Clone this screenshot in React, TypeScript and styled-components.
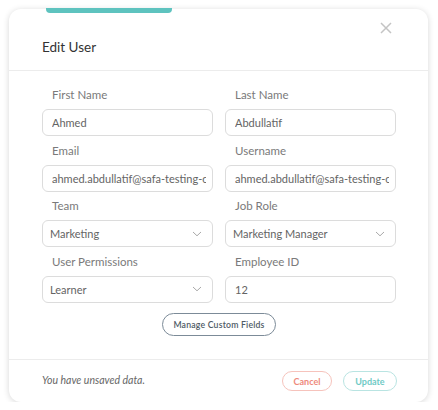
import React from "react";
import styled, { createGlobalStyle } from "styled-components";

const Global = createGlobalStyle`
  html, body { margin: 0; padding: 0; background: #ffffff; }
  body { font-family: Lato, "Open Sans", sans-serif; }
  * { box-sizing: border-box; }
`;

const Card = styled.div`
  position: relative;
  margin: 9px 0 0 9px;
  width: 419px;
  height: 393px;
  background: #fff;
  border-radius: 12px;
  box-shadow: 0 1px 6px rgba(0, 0, 0, 0.16);
  display: flex;
  flex-direction: column;
`;

const TabBar = styled.div`
  position: absolute;
  left: 37px;
  top: -1px;
  width: 126px;
  height: 5px;
  background: #5ec3bf;
  border-radius: 0 0 4px 4px;
`;

const Header = styled.div`
  height: 62px;
  border-bottom: 1px solid #ececec;
  display: flex;
  align-items: flex-end;
  padding: 0 0 14px 33px;
`;

const Title = styled.h2`
  margin: 0;
  font-size: 13.5px;
  font-weight: 400;
  color: #333;
  line-height: 18px;
`;

const CloseBtn = styled.button`
  position: absolute;
  right: 35px;
  top: 12px;
  width: 14px;
  height: 14px;
  padding: 0;
  border: none;
  background: none;
  display: flex;
  align-items: center;
  justify-content: center;
`;

const Body = styled.div`
  flex: 1;
  padding: 16px 32px 0 33px;
  display: flex;
  flex-direction: column;
`;

const Grid = styled.div`
  display: grid;
  grid-template-columns: 171px 171px;
  column-gap: 12px;
  row-gap: 6.6px;
`;

const Field = styled.div`
  display: flex;
  flex-direction: column;
`;

const Label = styled.label`
  font-size: 11.5px;
  line-height: 16px;
  color: #7a7a7a;
  padding-left: 10px;
  margin-bottom: 6px;
`;

const Input = styled.div`
  height: 27px;
  border: 1px solid #dcdcdc;
  border-radius: 6px;
  padding: 0 6px 0 9px;
  display: flex;
  align-items: center;
  font-size: 11px;
  color: #646464;
  white-space: nowrap;
`;

const Value = styled.span`
  flex: 1;
  min-width: 0;
  overflow: hidden;
  white-space: nowrap;
`;

const Select = styled(Input)`
  padding: 0 10px 0 7px;
  justify-content: space-between;
`;

const Actions = styled.div`
  display: flex;
  justify-content: center;
  margin-top: 10px;
`;

const OutlineBtn = styled.button`
  height: 23px;
  width: 114px;
  border: 1px solid #7c8b98;
  border-radius: 12px;
  background: #fff;
  font-family: Lato, sans-serif;
  font-size: 8.7px;
  font-weight: 600;
  letter-spacing: 0.2px;
  color: #4f5b66;
  padding: 0;
`;

const Footer = styled.div`
  height: 43px;
  border-top: 1px solid #ececec;
  display: flex;
  align-items: center;
  padding: 0 31px 0 33px;
  gap: 11px;
`;

const Note = styled.span`
  flex: 1;
  font-size: 10.5px;
  font-style: italic;
  color: #666;
  margin-top: -3px;
`;

const PillBtn = styled.button<{ $tone: "red" | "teal"; $w: number }>`
  height: 20px;
  width: ${(p) => p.$w}px;
  border-radius: 10px;
  background: #fff;
  border: 1px solid ${(p) => (p.$tone === "red" ? "#f6c3bc" : "#b9e4e2")};
  color: ${(p) => (p.$tone === "red" ? "#ee8a7c" : "#6fcac5")};
  font-family: Lato, sans-serif;
  font-size: 9px;
  font-weight: 700;
  padding: 0;
`;

const Chevron = () => (
  <svg width="10" height="6" viewBox="0 0 10 6">
    <path d="M1 1 L5 4.8 L9 1" fill="none" stroke="#a9a9a9" strokeWidth="1" />
  </svg>
);

const fields: { label: string; value: string; select?: boolean }[] = [
  { label: "First Name", value: "Ahmed" },
  { label: "Last Name", value: "Abdullatif" },
  { label: "Email", value: "ahmed.abdullatif@safa-testing-company.com" },
  { label: "Username", value: "ahmed.abdullatif@safa-testing-company.com" },
  { label: "Team", value: "Marketing", select: true },
  { label: "Job Role", value: "Marketing Manager", select: true },
  { label: "User Permissions", value: "Learner", select: true },
  { label: "Employee ID", value: "12" },
];

export default function App() {
  return (
    <>
      <Global />
      <Card>
        <TabBar />
        <CloseBtn aria-label="Close">
          <svg width="12" height="12" viewBox="0 0 12 12">
            <path d="M1 1 L11 11 M11 1 L1 11" stroke="#c4c4c4" strokeWidth="1.5" />
          </svg>
        </CloseBtn>
        <Header>
          <Title>Edit User</Title>
        </Header>
        <Body>
          <Grid>
            {fields.map((f) => (
              <Field key={f.label}>
                <Label>{f.label}</Label>
                {f.select ? (
                  <Select>
                    <Value>{f.value}</Value>
                    <Chevron />
                  </Select>
                ) : (
                  <Input>
                    <Value>{f.value}</Value>
                  </Input>
                )}
              </Field>
            ))}
          </Grid>
          <Actions>
            <OutlineBtn>Manage Custom Fields</OutlineBtn>
          </Actions>
        </Body>
        <Footer>
          <Note>You have unsaved data.</Note>
          <PillBtn $tone="red" $w={50}>Cancel</PillBtn>
          <PillBtn $tone="teal" $w={54}>Update</PillBtn>
        </Footer>
      </Card>
    </>
  );
}
